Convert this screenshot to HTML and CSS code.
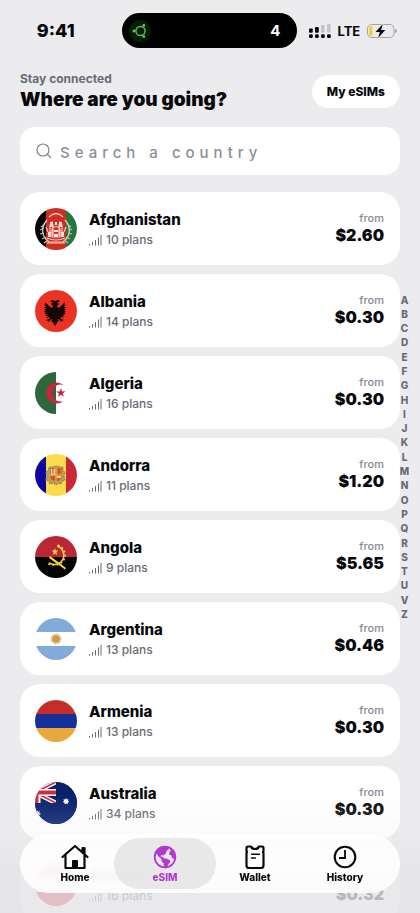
FILE: index.html
```html
<!DOCTYPE html>
<html lang="en">
<head>
<meta charset="utf-8">
<meta name="viewport" content="width=device-width, initial-scale=1">
<title>eSIM</title>
<link rel="stylesheet" href="styles.css">
</head>
<body>
<svg class="defs" aria-hidden="true">
  <symbol id="signal" viewBox="0 0 13 12"><path d="M.5 10v1.500M3.500 8v3.500M6.500 6v5.500M9.500 3.500v8M12 1v10.500" fill="none" stroke="currentColor" stroke-width="1"/></symbol>
</svg>
<div class="app">
  <div class="status">
    <div class="time">9:41</div>
    <div class="island">
      <svg width="24" height="24" viewBox="0 0 24 24" aria-hidden="true">
        <circle cx="12" cy="12" r="11" fill="#071d07"/>
        <circle cx="12.500" cy="12" r="4.600" fill="none" stroke="#5fb455" stroke-width="1.500"/>
        <g fill="#69c35e"><circle cx="6" cy="12" r="1.400"/><circle cx="15.800" cy="6.400" r="1.400"/><circle cx="15.800" cy="17.600" r="1.400"/></g>
      </svg>
      <span>4</span>
    </div>
    <div class="radio">
      <svg width="22" height="16" viewBox="0 0 22 16" aria-hidden="true">
        <g fill="#c4c4c8"><rect x="12" y="2" width="3.600" height="7.500" rx="1"/><rect x="18" y="1" width="3.600" height="8.500" rx="1"/></g>
        <g fill="#08090c"><rect x="0" y="5.500" width="3.800" height="4.300" rx="1"/><rect x="6" y="4" width="3.800" height="5.800" rx="1"/><rect x="0" y="11.300" width="3.800" height="3.800" rx="1.300"/><rect x="6" y="11.300" width="3.800" height="3.800" rx="1.300"/><rect x="12" y="11.300" width="3.800" height="3.800" rx="1.300"/><rect x="18" y="11.300" width="3.800" height="3.800" rx="1.300"/></g>
      </svg>
      <span>LTE</span>
      <svg width="30" height="16" viewBox="0 0 30 16" aria-hidden="true">
        <rect x=".5" y="1.500" width="26.500" height="13" rx="4.200" fill="none" stroke="#a3a3a7"/>
        <path d="M28.300 6v4q1.400-.6 1.400-2t-1.400-2z" fill="#88888c"/>
        <path d="M5.500 3v10H4.600Q2 13 2 10.500v-5Q2 3 4.600 3z" fill="#eed043"/>
        <path d="M15.800 1L8.500 9h4.300L11.200 15 18.300 7h-4.200z" fill="#08090c" stroke="#ececee" stroke-width="1.400" paint-order="stroke"/>
      </svg>
    </div>
  </div>

  <header class="header">
    <div>
      <p class="eyebrow">Stay connected</p>
      <h1>Where are you going?</h1>
    </div>
    <button class="mine" type="button">My eSIMs</button>
  </header>

  <label class="search">
    <svg width="16" height="16" viewBox="0 0 16 16" fill="none" stroke="#7f838d" stroke-width="1.200" stroke-linecap="round" aria-hidden="true"><circle cx="7" cy="7" r="6"/><path d="M11.300 11.300l3.500 3.300"/></svg>
    <input type="search" placeholder="Search a country" aria-label="Search a country">
  </label>

  <main class="list">
    <a class="card" href="#">
      <svg class="flag" viewBox="0 0 42 42" aria-hidden="true">
        <path fill="#060606" d="M0 0h11v42H0z"/><path fill="#cb3022" d="M11 0h20v42H11z"/><path fill="#25783a" d="M31 0h11v42H31z"/>
        <g fill="none" stroke="#f3cdc6" stroke-width="1.200"><path d="M14 9q7-7 14 0M12 12C5 20 7 29 14 34h14c7-5 9-14 2-22"/><path d="M10 16l-4 3M9 20l-4 2M9 25l-4 1M11 29l-4 2M13 32l-4 3M32 16l4 3M33 20l4 2M33 25l4 1M31 29l4 2M29 32l4 3" stroke="#b7c1b5"/><path d="M15 28V17l2-3 1 3v11M24 28V17l1-3 2 3v11M17 21q4-5 8 0v8h-8zM12 30q9 4 18 0M12 35h18M13 24l-2-5M29 24l2-5"/></g>
        <path d="M15 14h3v5h-3zM24 14h3v5h-3zM19 22h4v2h-4zM19 26h4v3h-4zM13 24h3v5h-3zM26 24h3v5h-3zM20 14h2v3h-2z" fill="#f7ded8"/>
      </svg>
      <div class="place"><h2>Afghanistan</h2><p><svg class="bars"><use href="#signal"/></svg>10 plans</p></div>
      <div class="price"><small>from</small><strong>$2.60</strong></div>
    </a>
    <a class="card" href="#">
      <svg class="flag" viewBox="0 0 42 42" aria-hidden="true">
        <path fill="#ea3323" d="M0 0h42v42H0z"/>
        <path fill="#160605" d="M21 13l-1-2-3-1-2 2 3 0-2 2 2 2-1 2-3-2-4-4 1 3-2-1 2 3-2 0 2 2-2 0 2 2-2 0 2 2-2 0 3 2-2 1 3 0-2 2 4-1-1 2-3 1 2 1 1 1 2-3 1 0-1 3 1-1 1 2 2 3 2-3 1-2 1 1-1-3 1 0 2 3 1-1 2-1-3-1-1-2 4 1-2-2 3 0-2-1 3-2-2 0 2-2-2 0 2-2-2 0 2-2-2 0 2-3-2 1 1-3-4 4-3 2-1-2 2-2-2-2 3 0-2-2-3 1z"/>
      </svg>
      <div class="place"><h2>Albania</h2><p><svg class="bars"><use href="#signal"/></svg>14 plans</p></div>
      <div class="price"><small>from</small><strong>$0.30</strong></div>
    </a>
    <a class="card" href="#">
      <svg class="flag" viewBox="0 0 42 42" aria-hidden="true">
        <path fill="#fff" d="M21 0h21v42H21z"/><path fill="#2d673b" d="M0 0h21v42H0z"/>
        <path fill="#d0223c" d="M28.500 13A10.500 10.500 0 1 0 28.500 29 8.500 8.500 0 1 1 28.500 13zM26 16l1 3.500 3.500-.2-2.800 2.100 1.300 3.400-3-2-3 2.200 1-3.500-3-2 3.800-.1z"/>
      </svg>
      <div class="place"><h2>Algeria</h2><p><svg class="bars"><use href="#signal"/></svg>16 plans</p></div>
      <div class="price"><small>from</small><strong>$0.30</strong></div>
    </a>
    <a class="card" href="#">
      <svg class="flag" viewBox="0 0 42 42" aria-hidden="true">
        <path fill="#10069f" d="M0 0h11v42H0z"/><path fill="#fadc4a" d="M11 0h20v42H11z"/><path fill="#cb2837" d="M31 0h11v42H31z"/>
        <path d="M14 13h3l4-1 4 1h3v4l2 1-1 4 1 4-3 1-1 3-3-1-2 2-2-2-4 1-1-3-3-1 1-4-1-4 2-1z" fill="#b8a35e" stroke="#8f8654" stroke-width="1.200" stroke-dasharray="2 1"/>
        <path d="M15 14h12v9q0 3-6 5-6-2-6-5z" fill="#d96a33"/><path d="M16 15h4v6h-4zM22 22h4v2h-4z" fill="#efd4b5"/><path d="M18 15v5M24 15v6M17 23v3M19 22v4M23 24v3" stroke="#b74425"/><path d="M21 14v14M15 21h12" stroke="#f3c33e"/>
      </svg>
      <div class="place"><h2>Andorra</h2><p><svg class="bars"><use href="#signal"/></svg>11 plans</p></div>
      <div class="price"><small>from</small><strong>$1.20</strong></div>
    </a>
    <a class="card" href="#">
      <svg class="flag" viewBox="0 0 42 42" aria-hidden="true">
        <path fill="#bc2736" d="M0 0h42v21H0z"/><path fill="#050505" d="M0 21h42v21H0z"/>
        <path d="M22 10c7 2 9 11 4 16-3 3-8 3-12 1" fill="none" stroke="#f6d648" stroke-width="1.600"/><path d="M23 9c9 4 9 14 3 18-4 3-9 2-13 1" fill="none" stroke="#f6d648" stroke-width="1.600" stroke-dasharray="1.800 2.400"/>
        <path d="M15 20q7 5 16 12l-1 1.500L14 22z" fill="#f6d648"/><path d="M20 12l.8 2.500 2.600.1-2 1.700.8 2.600-2.200-1.500-2.200 1.500.8-2.600-2-1.700 2.600-.1z" fill="#f6d648"/>
      </svg>
      <div class="place"><h2>Angola</h2><p><svg class="bars"><use href="#signal"/></svg>9 plans</p></div>
      <div class="price"><small>from</small><strong>$5.65</strong></div>
    </a>
    <a class="card" href="#">
      <svg class="flag" viewBox="0 0 42 42" aria-hidden="true">
        <path fill="#fff" d="M0 0h42v42H0z"/><path fill="#82aadb" d="M0 0h42v14H0zM0 28h42v14H0z"/>
        <circle cx="21" cy="21" r="4.500" fill="none" stroke="#d5b681" stroke-width="2" stroke-dasharray="1 .7"/><circle cx="21" cy="21" r="3.300" fill="#df9c3c" stroke="#b7833c" stroke-width=".8"/>
      </svg>
      <div class="place"><h2>Argentina</h2><p><svg class="bars"><use href="#signal"/></svg>13 plans</p></div>
      <div class="price"><small>from</small><strong>$0.46</strong></div>
    </a>
    <a class="card" href="#">
      <svg class="flag" viewBox="0 0 42 42" aria-hidden="true">
        <path fill="#c72d25" d="M0 0h42v14H0z"/><path fill="#16309a" d="M0 14h42v14H0z"/><path fill="#e7a93e" d="M0 28h42v14H0z"/>
      </svg>
      <div class="place"><h2>Armenia</h2><p><svg class="bars"><use href="#signal"/></svg>13 plans</p></div>
      <div class="price"><small>from</small><strong>$0.30</strong></div>
    </a>
    <a class="card" href="#">
      <svg class="flag" viewBox="0 0 42 42" aria-hidden="true">
        <path fill="#06206a" d="M0 0h42v42H0z"/>
        <path d="M-21 0l42 21M-21 21L21 0" stroke="#fff" stroke-width="4.500"/><path d="M0 10.500L21 21M0 10.500L21 0" stroke="#d32b3c" stroke-width="1.600"/>
        <path d="M0 10.500h21M2 0v21" stroke="#fff" stroke-width="7"/><path d="M0 10.500h21M1.500 0v21" stroke="#d32b3c" stroke-width="4"/>
        <path fill="#06206a" d="M21 0h21v42H21zM0 21h21v21H0z"/>
        <path fill="#fff" d="M31 16l.8 1.500 1.700-.3-.5 1.600 1.300 1.200-1.600.5-.1 1.700-1.500-.8-1.400.8-.3-1.700-1.600-.5 1.200-1.200-.5-1.600 1.700.3zM2 28l1 2 2-1-1 2 2 1-2 1 1 2-3 0-2-3z"/>
      </svg>
      <div class="place"><h2>Australia</h2><p><svg class="bars"><use href="#signal"/></svg>34 plans</p></div>
      <div class="price"><small>from</small><strong>$0.30</strong></div>
    </a>
    <a class="card" href="#">
      <svg class="flag" viewBox="0 0 42 42" aria-hidden="true">
        <path fill="#d92c3c" d="M0 0h42v42H0z"/><path fill="#fff" d="M0 14h42v14H0z"/>
      </svg>
      <div class="place"><h2>Austria</h2><p><svg class="bars"><use href="#signal"/></svg>16 plans</p></div>
      <div class="price price-low"><strong>$0.32</strong></div>
    </a>
  </main>

  <div class="letters">
    <span>A</span><span>B</span><span>C</span><span>D</span><span>E</span><span>F</span><span>G</span><span>H</span><span>I</span><span>J</span><span>K</span><span>L</span><span>M</span><span>N</span><span>O</span><span>P</span><span>Q</span><span>R</span><span>S</span><span>T</span><span>U</span><span>V</span><span>Z</span>
  </div>

  <div class="fade"></div>
  <nav class="tabs">
    <a href="#">
      <svg viewBox="0 0 28 26" fill="none" stroke="currentColor" stroke-width="2.200" stroke-linejoin="round" stroke-linecap="round" aria-hidden="true"><path d="M1.500 13L14 2l12.500 11M4.500 11v13h19V11M21.500 8V4h2v6"/><path d="M11.500 24v-7.500h5V24z" fill="currentColor" stroke-width="1"/></svg>
      Home
    </a>
    <a href="#" class="active">
      <svg viewBox="0 0 28 26" aria-hidden="true"><circle cx="14" cy="13" r="10.300" fill="none" stroke="currentColor" stroke-width="1.800"/><path fill="currentColor" d="M4 10q1-6 8-7.500h4l2 2.500-2.500 2-.5 2.500-3 2-2-.5-.5 1.500 2.500.5 1 1.500h2.500l3 1.500 1 2-2 2-1.500 3.500-1.500 1-1.500-2-.5-3.500-2-1.500v-2.500l-3-2.500-1.500-2.500zM18 3.500q6 3 6.200 8.500l-.7 3-2.500-1-.5-2.500-2.500-1 .5-2.500 1.500-1z"/></svg>
      eSIM
    </a>
    <a href="#">
      <svg viewBox="0 0 28 26" fill="none" stroke="currentColor" stroke-width="2.200" stroke-linejoin="round" stroke-linecap="round" aria-hidden="true"><path d="M7 2.500h3q1 2.500 4 2.500t4-2.500h3q1.500 0 1.500 1.500v3l-.5 1 .5 1v12.500q0 2.500-2.500 2.500H8q-2.500 0-2.500-2.500V9l.5-1-.5-1V4q0-1.500 1.500-1.500z"/><path d="M10.500 10.300h8M10.500 14h4" stroke-width="1.400"/></svg>
      Wallet
    </a>
    <a href="#">
      <svg viewBox="0 0 28 26" fill="none" stroke="currentColor" stroke-width="2.100" aria-hidden="true"><circle cx="14" cy="13" r="10.300"/><path d="M14 6v8H8" stroke-width="1.800"/></svg>
      History
    </a>
  </nav>
</div>
</body>
</html>
```
FILE: styles.css
```css
* { box-sizing: border-box; }

body, h1, h2, p { margin: 0; }

body {
  background: #ececee;
  color: #08090c;
  font-family: Inter, "Liberation Sans", sans-serif;
}

a { color: inherit; text-decoration: none; }

.defs { position: absolute; width: 0; height: 0; }

.app {
  position: relative;
  display: flex;
  flex-direction: column;
  height: 100vh;
  padding: 0 20px;
  overflow: hidden;
}

.status {
  flex: none;
  display: grid;
  grid-template-columns: 1fr 175px 1fr;
  align-items: center;
  height: 61px;
  margin: 0 -20px;
  padding-right: 2px;
}

.time {
  padding-right: 10px;
  text-align: center;
  font-size: 18px;
  font-weight: 800;
}

.island {
  display: flex;
  align-items: center;
  justify-content: space-between;
  height: 35px;
  padding: 0 16px 0 6px;
  border-radius: 18px;
  background: #000;
  color: #fff;
  font-size: 15px;
  font-weight: 700;
}

.radio {
  display: flex;
  align-items: center;
  gap: 7px;
  padding-left: 12px;
  font-size: 13px;
  font-weight: 700;
}

.radio svg { flex: none; }

.header {
  flex: none;
  display: flex;
  align-items: center;
  justify-content: space-between;
  height: 66px;
  padding-bottom: 6px;
}

.eyebrow {
  color: #686b75;
  font-size: 12px;
  font-weight: 700;
  line-height: 16px;
}

h1 {
  font-size: 19px;
  font-weight: 900;
  line-height: 25px;
}

.mine {
  height: 33px;
  padding: 0 15px;
  border: 0;
  border-radius: 17px;
  background: #fff;
  color: inherit;
  font: 800 12px Inter, "Liberation Sans", sans-serif;
}

.search {
  flex: none;
  display: flex;
  align-items: center;
  gap: 8px;
  height: 48px;
  margin-bottom: 17px;
  padding: 0 16px;
  border-radius: 15px;
  background: #fff;
}

.search input {
  flex: 1;
  min-width: 0;
  padding: 2px 0 0;
  border: 0;
  outline: 0;
  background: none;
  font: 500 15px Inter, "Liberation Sans", sans-serif;
  letter-spacing: 5px;
}

.search input::placeholder { color: #8b8e97; }

.list {
  flex: none;
  display: flex;
  flex-direction: column;
  gap: 9px;
}

.card {
  display: flex;
  align-items: center;
  gap: 12px;
  height: 73px;
  padding: 0 16px 0 15px;
  border-radius: 20px;
  background: #fff;
}

.flag {
  flex: none;
  width: 42px;
  height: 42px;
  border-radius: 50%;
}

.place { flex: 1; padding-top: 3px; }

h2 {
  font-size: 15px;
  font-weight: 800;
  line-height: 20px;
}

.place p {
  display: flex;
  align-items: center;
  gap: 4px;
  color: #686b75;
  font-size: 12px;
  font-weight: 500;
  line-height: 20px;
}

.bars { width: 13px; height: 12px; }

.price {
  display: flex;
  flex-direction: column;
  align-items: flex-end;
  padding-bottom: 2px;
}

.price-low { padding: 18px 0 0; }

.price small {
  color: #868993;
  font-size: 11px;
  font-weight: 500;
  line-height: 14px;
}

.price strong {
  font-size: 16px;
  font-weight: 900;
  line-height: 20px;
}

.letters {
  position: absolute;
  top: 50%;
  right: 9px;
  display: flex;
  flex-direction: column;
  justify-content: space-between;
  width: 13px;
  height: 36vh;
  transform: translateY(-50%);
  color: #686b75;
  text-align: center;
  font-size: 10px;
  font-weight: 800;
  line-height: 14px;
}

.fade {
  position: absolute;
  inset: auto 0 0;
  height: 120px;
  background: linear-gradient(#e6e6e900, #e6e6e933 35%, #e4e4e7cc 70%, #e4e4e7cc);
}

.tabs {
  position: absolute;
  right: 20px;
  bottom: 20px;
  left: 20px;
  display: grid;
  grid-template-columns: repeat(4, 1fr);
  height: 59px;
  padding: 4px 10px;
  border-radius: 30px;
  background: #ffffffd9;
  backdrop-filter: blur(2px);
  font-size: 10px;
  font-weight: 800;
}

.tabs a {
  display: flex;
  flex-direction: column;
  align-items: center;
  justify-content: center;
  gap: 1px;
  margin: 0 -6px;
  border-radius: 26px;
  line-height: 12px;
}

.tabs svg { width: 28px; height: 26px; }

.tabs .active { background: #e2e2e4cc; color: #b238d2; }
```
